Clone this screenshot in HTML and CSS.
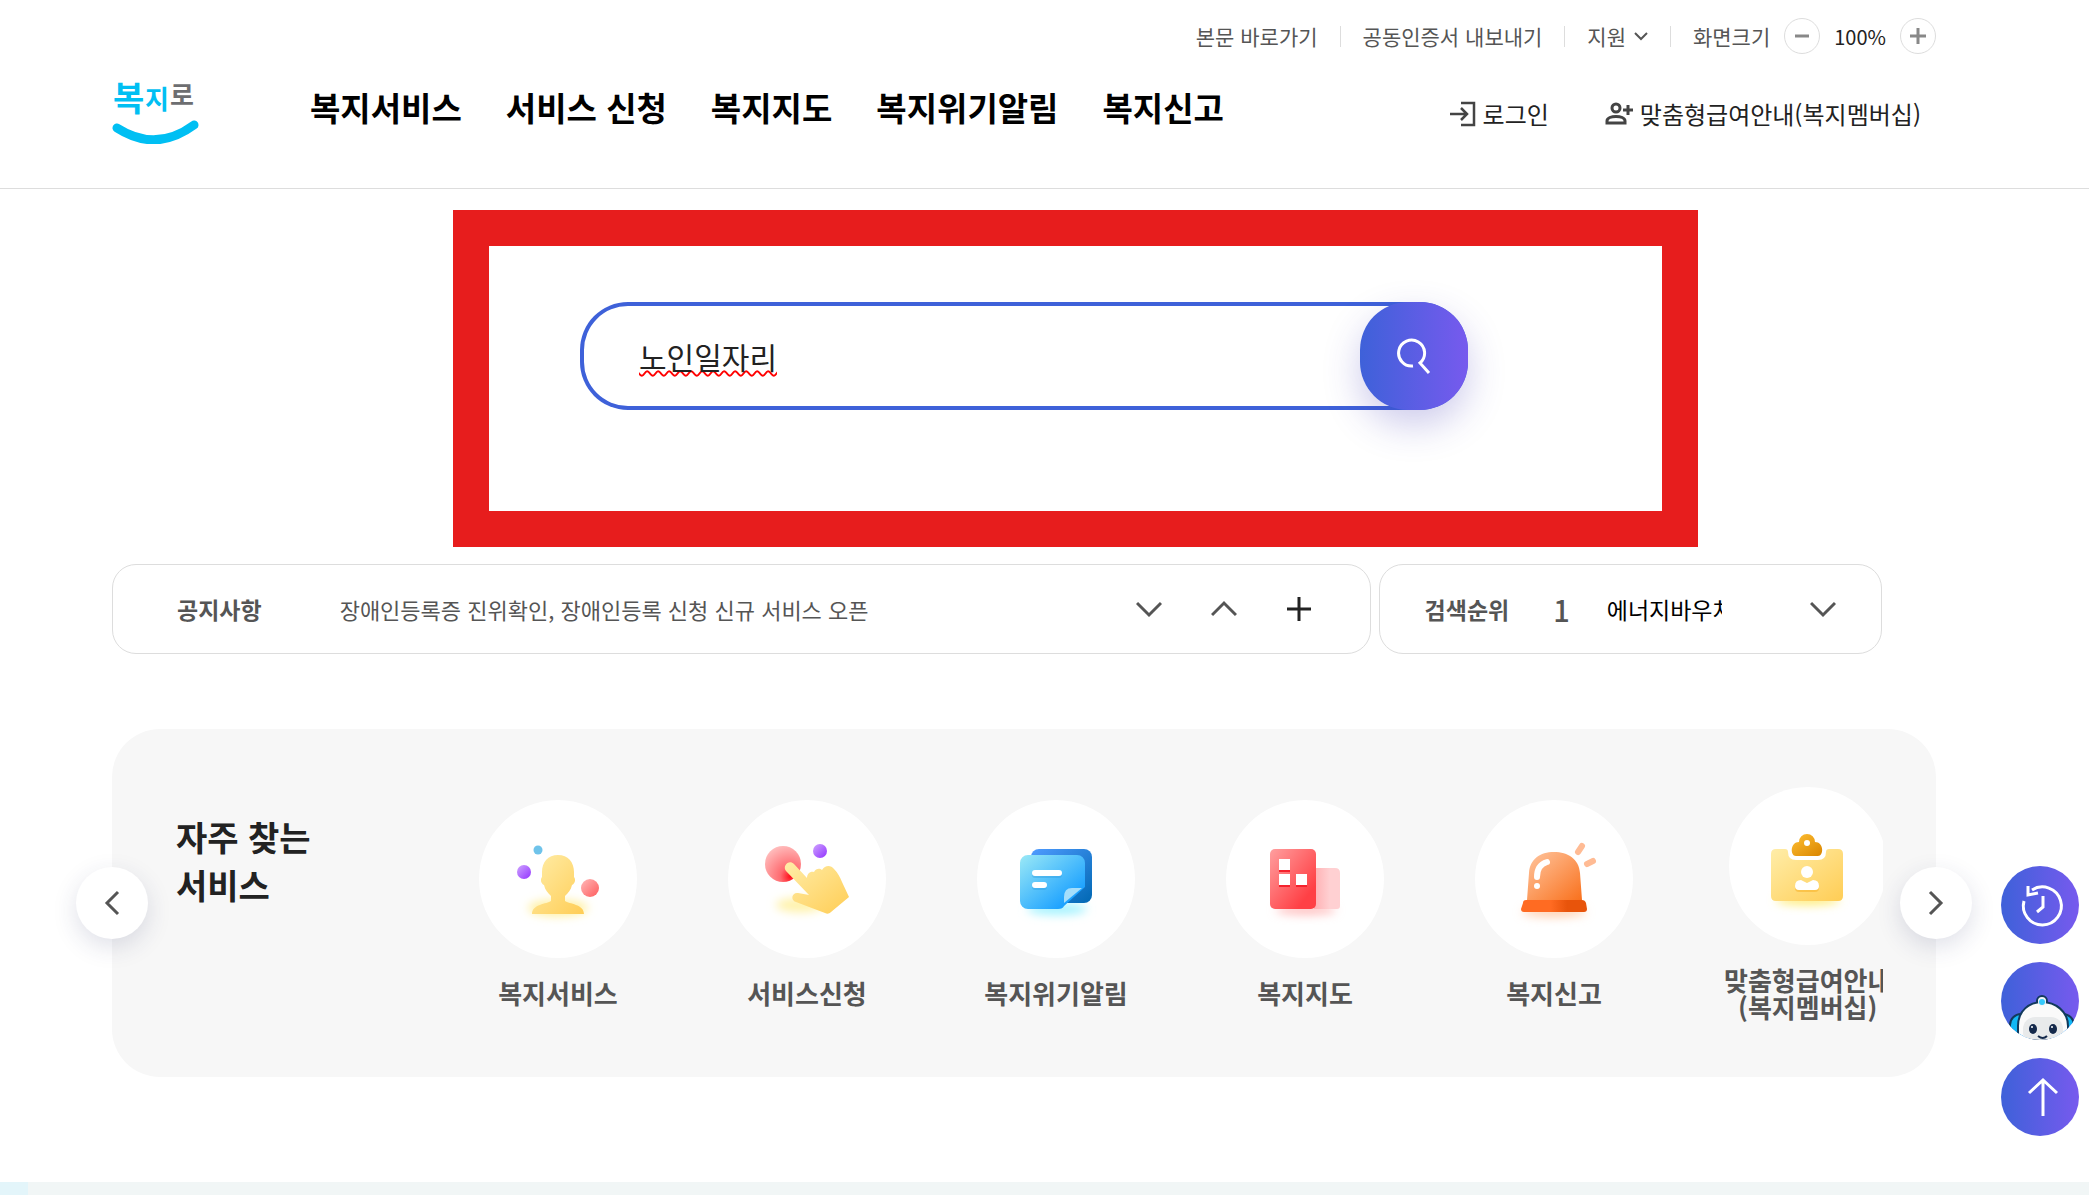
FILE: index.html
```html
<!DOCTYPE html>
<html lang="ko">
<head>
<meta charset="UTF-8" />
<meta name="viewport" content="width=device-width, initial-scale=1" />
<title>복지로</title>
<link rel="stylesheet" href="styles.css">
</head>
<body>
  <header class="header">
    <div class="topbar">
      <ul class="util">
        <li><a href="#content">본문 바로가기</a></li>
        <li><a href="#">공동인증서 내보내기</a></li>
        <li>
          <button type="button" class="util-btn">지원
            <svg width="14" height="10" viewBox="0 0 14 10" fill="none" stroke="#555" stroke-width="2"><path d="M1 2l6 6 6-6"/></svg>
          </button>
        </li>
        <li class="zoom">
          <span>화면크기</span>
          <button type="button" class="zoom-btn" aria-label="축소">
            <svg width="16" height="16" viewBox="0 0 16 16" stroke="#888" stroke-width="3"><path d="M1 8h14"/></svg>
          </button>
          <span class="zoom-value">100%</span>
          <button type="button" class="zoom-btn" aria-label="확대">
            <svg width="16" height="16" viewBox="0 0 16 16" stroke="#888" stroke-width="3"><path d="M0 8h16M8 0v16"/></svg>
          </button>
        </li>
      </ul>
    </div>

    <div class="gnb">
      <a href="#" class="logo" aria-label="복지로 홈">
        <svg width="88" height="75" viewBox="0 0 88 75">
          <text class="logo-text" x="1" y="42" font-size="34" fill="#00bff3">복</text>
          <text class="logo-text" x="33" y="40" font-size="26" fill="#00bff3">지</text>
          <text class="logo-text" x="58" y="36" font-size="26" fill="#6d6e71">로</text>
          <path d="M5 59Q44 84 82 56" fill="none" stroke="#00bff3" stroke-width="9" stroke-linecap="round"/>
        </svg>
      </a>
      <nav class="menu">
        <a href="#">복지서비스</a>
        <a href="#">서비스 신청</a>
        <a href="#">복지지도</a>
        <a href="#">복지위기알림</a>
        <a href="#">복지신고</a>
      </nav>
      <div class="member">
        <a href="#">
          <svg width="26" height="26" viewBox="0 0 26 26" fill="none" stroke="#444" stroke-width="2.5"><path d="M11 2h13v22H11M0 13h17M11 7l6 6-6 6"/></svg>
          로그인
        </a>
        <a href="#">
          <svg width="28" height="24" viewBox="0 0 28 24" fill="none" stroke="#444" stroke-width="3"><circle cx="11" cy="6" r="4"/><path d="M2 21v-2c0-6 18-6 18 0v2zM18 8h10M23 3v10"/></svg>
          맞춤형급여안내(복지멤버십)
        </a>
      </div>
    </div>
  </header>

  <main class="main" id="content">
    <section class="search-frame">
      <form class="search" role="search">
        <input type="text" class="search-input" name="q" value="노인일자리" aria-label="검색어" />
        <button type="submit" class="search-btn" aria-label="검색">
          <svg width="36" height="38" viewBox="0 0 36 38" fill="none" stroke="#fff" stroke-width="3"><path d="M17 29a13 13 0 1 1 7-3l9 10"/></svg>
        </button>
      </form>
    </section>

    <section class="info">
      <div class="notice">
        <strong>공지사항</strong>
        <a href="#" class="notice-link">장애인등록증 진위확인, 장애인등록 신청 신규 서비스 오픈</a>
        <div class="notice-ctrl">
          <button type="button" aria-label="다음"><svg width="26" height="26" viewBox="0 0 26 26" fill="none" stroke="#555" stroke-width="3"><path d="M1 7l12 12L25 7"/></svg></button>
          <button type="button" aria-label="이전"><svg width="26" height="26" viewBox="0 0 26 26" fill="none" stroke="#555" stroke-width="3"><path d="M1 19L13 7l12 12"/></svg></button>
          <button type="button" aria-label="더보기"><svg width="26" height="26" viewBox="0 0 26 26" fill="none" stroke="#222" stroke-width="3"><path d="M1 13h24M13 1v24"/></svg></button>
        </div>
      </div>
      <div class="rank">
        <strong>검색순위</strong>
        <span class="rank-num">1</span>
        <a href="#" class="rank-word">에너지바우처</a>
        <button type="button" class="rank-btn" aria-label="펼치기"><svg width="26" height="26" viewBox="0 0 26 26" fill="none" stroke="#555" stroke-width="3"><path d="M1 7l12 12L25 7"/></svg></button>
      </div>
    </section>

    <section class="favorite">
      <h2>자주 찾는<br>서비스</h2>
      <div class="slides">
        <a href="#" class="slide">
          <span class="circle">
            <svg viewBox="0 0 158 158">
              <defs>
                <linearGradient id="gYellow" x1="0" y1="0" x2="1" y2="1"><stop offset="0" stop-color="#ffeda8"/><stop offset="1" stop-color="#ffcd55"/></linearGradient>
                <linearGradient id="gRed" x1="0" y1="0" x2="1" y2="1"><stop offset="0" stop-color="#ffb9b9"/><stop offset="1" stop-color="#ff5c5c"/></linearGradient>
                <linearGradient id="gPurple" x1="0" y1="0" x2="1" y2="1"><stop offset="0" stop-color="#cfa4ff"/><stop offset="1" stop-color="#9233ff"/></linearGradient>
                <filter id="blur" x="-30%" y="-100%" width="160%" height="300%"><feGaussianBlur stdDeviation="5"/></filter>
              </defs>
              <ellipse cx="79" cy="108" rx="30" ry="8" fill="#fff0a0" filter="url(#blur)"/>
              <circle cx="59" cy="50" r="4.5" fill="#6fc3ea"/>
              <circle cx="45" cy="72" r="7" fill="url(#gPurple)"/>
              <circle cx="111" cy="88" r="9" fill="url(#gRed)"/>
              <path d="M79 55c10 0 16 7 16 17v5c2 2 1 7-2 8-1 5-4 8-7 11v5c4 3 19 3 19 13H53c0-10 15-10 19-13v-5c-3-3-6-6-7-11-3-1-4-6-2-8v-5c0-10 6-17 16-17z" fill="url(#gYellow)"/>
            </svg>
          </span>
          <span class="label">복지서비스</span>
        </a>
        <a href="#" class="slide">
          <span class="circle">
            <svg viewBox="0 0 158 158">
              <defs>
                <radialGradient id="gTouch" cx="0.7" cy="0.85" r="0.9"><stop offset="0" stop-color="#ff0f1a"/><stop offset="0.3" stop-color="#ff6b70"/><stop offset="1" stop-color="#ffbcbc"/></radialGradient>
              </defs>
              <ellipse cx="72" cy="105" rx="24" ry="7" fill="#fff2a8" filter="url(#blur)"/>
              <circle cx="55" cy="64" r="18" fill="url(#gTouch)"/>
              <circle cx="92" cy="51" r="7" fill="url(#gPurple)"/>
              <path d="M66 64L79 78c0-4 3-7 7-6 2-4 6-4 8-2 3-5 9-5 12-1 4 4 6 8 8 13l7 15-18 15c-2 2-4 2-6 1L68 102c-6-2-4-10 2-9l11 2L58 71c-4-5 3-12 8-7z" fill="url(#gYellow)"/>
            </svg>
          </span>
          <span class="label">서비스신청</span>
        </a>
        <a href="#" class="slide">
          <span class="circle">
            <svg viewBox="0 0 158 158">
              <defs>
                <linearGradient id="gBack" x1="0" y1="0" x2="1" y2="1"><stop offset="0" stop-color="#4f9bff"/><stop offset="1" stop-color="#0068b3"/></linearGradient>
                <linearGradient id="gNote" x1="0" y1="0" x2="1" y2="1"><stop offset="0" stop-color="#9be9f6"/><stop offset="0.8" stop-color="#1da2ff"/></linearGradient>
              </defs>
              <ellipse cx="80" cy="109" rx="30" ry="6" fill="#a4f3ff" filter="url(#blur)"/>
              <rect x="54" y="49" width="61" height="54" rx="8" fill="url(#gBack)"/>
              <path d="M51 55h49a8 8 0 0 1 8 8v24l-21 19q-1 3-6 3H51a8 8 0 0 1-8-8V63a8 8 0 0 1 8-8z" fill="url(#gNote)"/>
              <path d="M87 103V97q0-9 8-9h10z" fill="#a5defb"/>
              <path d="M58 75h24M58 87h9" stroke="#2f9de0" stroke-width="6" stroke-linecap="round" opacity="0.4"/>
              <path d="M58 73h24M58 85h9" stroke="#fff" stroke-width="6" stroke-linecap="round"/>
            </svg>
          </span>
          <span class="label">복지위기알림</span>
        </a>
        <a href="#" class="slide">
          <span class="circle">
            <svg viewBox="0 0 158 158">
              <defs>
                <linearGradient id="gBuild" x1="0" y1="0" x2="1" y2="1"><stop offset="0" stop-color="#ff9f9f"/><stop offset="0.8" stop-color="#ff4045"/></linearGradient>
                <linearGradient id="gSide" x1="0" y1="0" x2="1" y2="0"><stop offset="0" stop-color="#ffb0b3"/><stop offset="0.6" stop-color="#ffd0d2"/></linearGradient>
              </defs>
              <ellipse cx="80" cy="110" rx="30" ry="5" fill="#ffc0c0" filter="url(#blur)"/>
              <path d="M88 68h21q5 0 5 5v33q0 3-3 3H88z" fill="url(#gSide)"/>
              <rect x="44" y="49" width="46" height="60" rx="5" fill="url(#gBuild)"/>
              <path d="M53 61h11v11H53zM53 76h11v11H53zM70 76h11v11H70z" fill="#f5222d"/>
              <path d="M53 59h11v11H53zM53 74h11v11H53zM70 74h11v11H70z" fill="#fff"/>
            </svg>
          </span>
          <span class="label">복지지도</span>
        </a>
        <a href="#" class="slide">
          <span class="circle">
            <svg viewBox="0 0 158 158">
              <defs>
                <linearGradient id="gSiren" x1="0" y1="0" x2="1" y2="1"><stop offset="0" stop-color="#ffc6a0"/><stop offset="1" stop-color="#f9711d"/></linearGradient>
                <linearGradient id="gBase" x1="0" y1="0" x2="1" y2="0"><stop offset="0.45" stop-color="#ff6b22"/><stop offset="0.7" stop-color="#e8540b"/></linearGradient>
              </defs>
              <ellipse cx="79" cy="112" rx="32" ry="5" fill="#ffcfae" filter="url(#blur)"/>
              <path d="M52 100l2-27c1-14 11-21 25-21s25 7 26 21l2 27z" fill="url(#gSiren)"/>
              <path d="M51 100h56q3 0 4 3l1 6q0 3-3 3H49q-3 0-3-3l2-6q0-3 3-3z" fill="url(#gBase)"/>
              <path d="M72 62Q62 65 62 77" fill="none" stroke="#fff" stroke-width="6" stroke-linecap="round"/>
              <circle cx="62" cy="86" r="3" fill="#fff"/>
              <path d="M107 46l-4 6M118 61l-6 3" stroke="#ffbb94" stroke-width="6" stroke-linecap="round"/>
            </svg>
          </span>
          <span class="label">복지신고</span>
        </a>
        <a href="#" class="slide">
          <span class="circle">
            <svg viewBox="0 0 158 158">
              <defs>
                <linearGradient id="gClip" x1="0" y1="0" x2="1" y2="1"><stop offset="0" stop-color="#ffc034"/><stop offset="1" stop-color="#d98500"/></linearGradient>
              </defs>
              <ellipse cx="79" cy="113" rx="32" ry="5" fill="#ffec75" filter="url(#blur)"/>
              <path d="M47 62h9q3 0 3 3 0 8 8 8h22q8 0 8-8 0-3 3-3h9q5 0 5 5v42q0 5-5 5H47q-5 0-5-5V67q0-5 5-5z" fill="url(#gYellow)"/>
              <path d="M70 55a8 8 0 0 1 16 0c9 0 9 14 3 14H67c-6 0-6-14 3-14z" fill="url(#gClip)"/>
              <circle cx="78" cy="56" r="3" fill="#fff"/>
              <path d="M66 101q0-7 6-7l6 3 6-3q6 0 6 7 0 4-4 4H70q-4 0-4-4z" fill="#f8b62f" opacity="0.6"/>
              <circle cx="78" cy="85" r="6" fill="#fff"/>
              <path d="M66 99q0-6 6-6l6 3 6-3q6 0 6 6 0 4-4 4H70q-4 0-4-4z" fill="#fff"/>
            </svg>
          </span>
          <span class="label">맞춤형급여안내<br>(복지멤버십)</span>
        </a>
      </div>
      <button type="button" class="arrow prev" aria-label="이전 서비스">
        <svg width="26" height="26" viewBox="0 0 26 26" fill="none" stroke="#555" stroke-width="3"><path d="M19 2L8 13l11 11"/></svg>
      </button>
      <button type="button" class="arrow next" aria-label="다음 서비스">
        <svg width="26" height="26" viewBox="0 0 26 26" fill="none" stroke="#555" stroke-width="3"><path d="M7 2l11 11L7 24"/></svg>
      </button>
    </section>
  </main>

  <footer class="bottom"></footer>

  <aside class="quick">
    <button type="button" aria-label="최근 이용">
      <svg viewBox="0 0 78 78" fill="none" stroke="#fff" stroke-width="3"><path d="M23 35a19 19 0 1 0 8-11M27 20v9l10-2M42 30v11l-6 5"/></svg>
    </button>
    <button type="button" aria-label="챗봇">
      <svg viewBox="0 0 78 78">
        <rect x="9" y="52" width="64" height="25" rx="11" fill="#12b8f5" stroke="#123a5c" stroke-width="2"/>
        <circle cx="41" cy="39" r="5" fill="#f4f5f6" stroke="#123a5c" stroke-width="2"/>
        <path d="M17 78V64C17 49 28 40 41 40s26 9 26 24v14z" fill="#fafafa" stroke="#123a5c" stroke-width="2"/>
        <circle cx="41" cy="40" r="4" fill="#f4f5f6"/>
        <rect x="22" y="55" width="40" height="28" rx="12" fill="#e8eaeb"/>
        <circle cx="41" cy="40" r="3" fill="#35c9fb"/>
        <ellipse cx="32" cy="67" rx="4" ry="5" fill="#14294b"/>
        <ellipse cx="52" cy="67" rx="4" ry="5" fill="#14294b"/>
        <circle cx="31" cy="65" r="1" fill="#fff"/>
        <circle cx="51" cy="65" r="1" fill="#fff"/>
        <path d="M37 74q5 4 9 0" fill="none" stroke="#14294b" stroke-width="2"/>
      </svg>
    </button>
    <button type="button" aria-label="맨 위로">
      <svg viewBox="0 0 78 78" fill="none" stroke="#fff" stroke-width="3"><path d="M42 58V22M28 35l14-13 14 13"/></svg>
    </button>
  </aside>
</body>
</html>
```
FILE: styles.css
```css
* {
  box-sizing: border-box;
}
body {
  margin: 0;
  min-height: 100vh;
  display: flex;
  flex-direction: column;
  background: #fff;
  color: #222;
  font-family: "Noto Sans CJK KR", "Noto Sans", sans-serif;
}
a {
  color: inherit;
  text-decoration: none;
}
button {
  padding: 0;
  border: none;
  background: none;
  color: inherit;
  font-family: inherit;
  cursor: pointer;
}
svg {
  display: block;
  flex: none;
}

/* header */
.header {
  padding: 18px 153px 44px 112px;
  border-bottom: 1px solid #ddd;
}
.util {
  display: flex;
  justify-content: flex-end;
  align-items: center;
  height: 36px;
  margin: 0;
  padding: 0;
  list-style: none;
  font-size: 21px;
  color: #555;
}
.util li {
  display: flex;
  align-items: center;
}
.util li + li::before {
  content: "";
  width: 1px;
  height: 21px;
  margin: 0 22px;
  background: #ddd;
}
.util-btn {
  display: flex;
  align-items: center;
  gap: 8px;
  font-size: 21px;
}
.zoom-btn {
  display: flex;
  justify-content: center;
  align-items: center;
  width: 36px;
  height: 36px;
  margin-left: 14px;
  border: 1px solid #ddd;
  border-radius: 50%;
}
.zoom-value {
  margin-left: 14px;
  font-size: 20px;
  color: #222;
}
.gnb {
  display: flex;
  align-items: center;
  margin-top: 15px;
}
.logo-text {
  font-weight: 700;
}
.menu {
  display: flex;
  gap: 44px;
  margin-left: 110px;
  font-size: 33px;
  line-height: 48px;
  font-weight: 700;
  color: #000;
}
.member {
  display: flex;
  gap: 56px;
  margin-left: auto;
  padding: 14px 15px 0 0;
  font-size: 24px;
  line-height: 36px;
}
.member a {
  display: flex;
  align-items: center;
  gap: 7px;
}

/* search */
.main {
  padding: 21px 153px 105px 112px;
}
.search-frame {
  max-width: 1245px;
  margin-left: 341px;
  padding: 56px 194px 101px 91px;
  border: 36px solid #e71d1d;
}
.search {
  display: flex;
  height: 108px;
  border-radius: 48px;
  box-shadow: inset 0 0 0 4px #3e61d9;
}
.search-input {
  flex: 1;
  min-width: 0;
  padding: 0 59px;
  border: none;
  outline: none;
  background: none;
  color: #222;
  font-family: inherit;
  font-size: 30px;
  text-decoration: underline wavy #f00 2px;
}
.search-btn {
  display: flex;
  justify-content: center;
  align-items: center;
  width: 108px;
  height: 108px;
  border-radius: 48px;
  background: linear-gradient(90deg, #3e61d9, #775aee);
  box-shadow: 0 15px 36px rgba(60, 50, 180, 0.25);
}

/* notice, ranking */
.info {
  display: grid;
  grid-template-columns: 5fr 2fr;
  gap: 8px;
  margin: 17px 54px 0 0;
  font-size: 23px;
  color: #555;
}
.notice,
.rank {
  display: flex;
  align-items: center;
  height: 90px;
  border: 1px solid #ddd;
  border-radius: 24px;
}
.notice {
  padding: 0 58px 0 64px;
}
.notice-link {
  margin-left: 78px;
  font-size: 22px;
}
.notice-ctrl {
  display: flex;
  gap: 49px;
  margin-left: auto;
}
.rank {
  padding: 0 45px;
}
.rank-num {
  margin-left: 44px;
  font-size: 29px;
  line-height: 36px;
  font-weight: 500;
}
.rank-word {
  width: 115px;
  margin-left: 37px;
  overflow: hidden;
  white-space: nowrap;
  color: #000;
}
.rank-btn {
  margin-left: auto;
}

/* favorite services */
.favorite {
  position: relative;
  display: flex;
  height: 348px;
  margin-top: 75px;
  padding: 0 53px 0 64px;
  border-radius: 48px;
  background: #f7f7f7;
}
.favorite h2 {
  flex: none;
  width: 303px;
  margin: 84px 0 0;
  font-size: 34px;
  line-height: 48px;
}
.slides {
  flex: 1;
  display: flex;
  align-items: center;
  gap: 91px;
  min-width: 0;
  overflow: hidden;
}
.slide {
  flex: none;
  display: flex;
  flex-direction: column;
  align-items: center;
  gap: 21px;
  min-width: 158px;
}
.circle {
  width: 158px;
  height: 158px;
  border-radius: 50%;
  background: #fff;
}
.label {
  font-size: 26px;
  line-height: 27px;
  font-weight: 700;
  color: #555;
  text-align: center;
  white-space: nowrap;
}
.arrow {
  position: absolute;
  top: 50%;
  display: flex;
  justify-content: center;
  align-items: center;
  width: 72px;
  height: 72px;
  margin-top: -36px;
  border-radius: 50%;
  background: #fff;
  box-shadow: 0 8px 24px rgba(40, 50, 100, 0.15);
}
.prev {
  left: -36px;
}
.next {
  right: -36px;
}

/* bottom band */
.bottom {
  flex: 1;
  background: linear-gradient(90deg, #e3f5fa 28px, #f1f6f6 28px);
}

/* floating buttons */
.quick {
  position: fixed;
  right: 10px;
  bottom: 59px;
  display: flex;
  flex-direction: column;
  gap: 18px;
}
.quick button {
  width: 78px;
  height: 78px;
  border-radius: 50%;
  overflow: hidden;
  background: linear-gradient(90deg, #3e61d9, #775aee);
}
```
